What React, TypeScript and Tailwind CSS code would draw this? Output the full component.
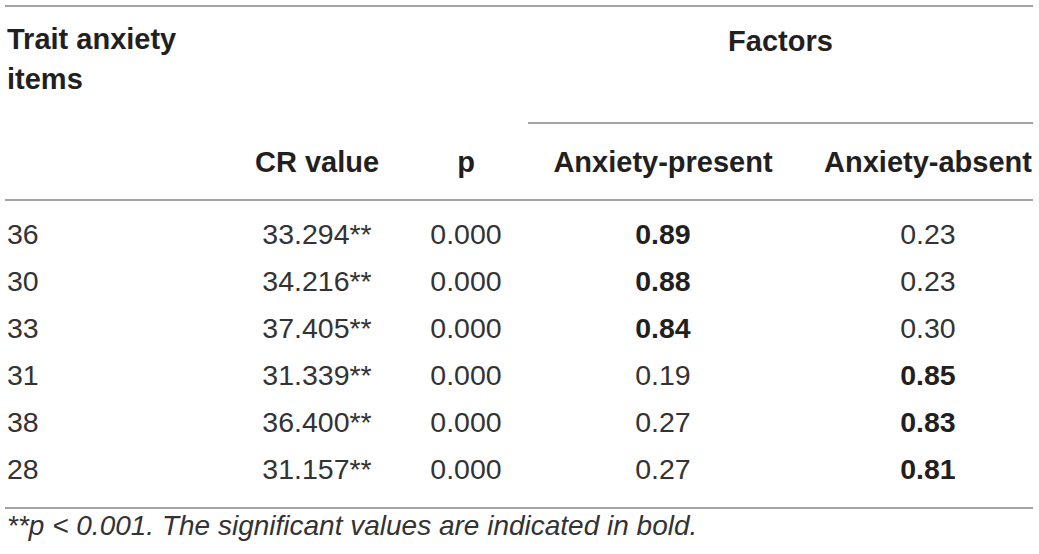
import React from 'react';

type Row = {
  item: string;
  cr: string;
  p: string;
  present: string;
  absent: string;
  boldPresent: boolean;
};

const rows: Row[] = [
  { item: '36', cr: '33.294**', p: '0.000', present: '0.89', absent: '0.23', boldPresent: true },
  { item: '30', cr: '34.216**', p: '0.000', present: '0.88', absent: '0.23', boldPresent: true },
  { item: '33', cr: '37.405**', p: '0.000', present: '0.84', absent: '0.30', boldPresent: true },
  { item: '31', cr: '31.339**', p: '0.000', present: '0.19', absent: '0.85', boldPresent: false },
  { item: '38', cr: '36.400**', p: '0.000', present: '0.27', absent: '0.83', boldPresent: false },
  { item: '28', cr: '31.157**', p: '0.000', present: '0.27', absent: '0.81', boldPresent: false },
];

const cols = 'grid grid-cols-[225px_174px_124px_270px_235px]';

const App: React.FC = () => {
  return (
    <div className="w-[1039px] h-[554px] bg-white pt-[5px] pl-[5px] text-[28.5px] text-[#333] font-['Liberation_Sans',Arial,sans-serif] overflow-hidden">
      <div className="w-[1028px]">
        <div className="border-t-2 border-[#a3a3a3]" />

        {/* header */}
        <div className={`${cols} font-bold text-[29px] text-[#231f20] leading-[40px] border-b-2 border-[#a3a3a3]`}>
          <div className="row-span-2 pt-[12px] pl-[2px]">
            Trait anxiety
            <br />
            items
          </div>
          <div />
          <div />
          <div className="col-span-2 pt-[14px] pb-[61px] text-center border-b-2 border-[#a3a3a3]">Factors</div>
          <div className="pt-[18px] pb-[17px] text-center">CR value</div>
          <div className="pt-[18px] pb-[17px] text-center">p</div>
          <div className="pt-[18px] pb-[17px] text-center whitespace-nowrap">Anxiety-present</div>
          <div className="pt-[18px] pb-[17px] pl-[25px] text-center whitespace-nowrap">Anxiety-absent</div>
        </div>

        {/* body */}
        <div className="pt-[10px] pb-[14px] border-b-2 border-[#a3a3a3] leading-[47px]">
          {rows.map((r) => (
            <div key={r.item} className={cols}>
              <div className="pl-[2px]">{r.item}</div>
              <div className="text-center">{r.cr}</div>
              <div className="text-center">{r.p}</div>
              <div className={`text-center ${r.boldPresent ? 'font-bold text-[#231f20]' : ''}`}>{r.present}</div>
              <div className={`pl-[25px] text-center ${r.boldPresent ? '' : 'font-bold text-[#231f20]'}`}>{r.absent}</div>
            </div>
          ))}
        </div>

        <p className="mt-px pl-[2px] italic text-[28px] leading-[32px]">
          **p &lt; 0.001. The significant values are indicated in bold.
        </p>
      </div>
    </div>
  );
};

export default App;
